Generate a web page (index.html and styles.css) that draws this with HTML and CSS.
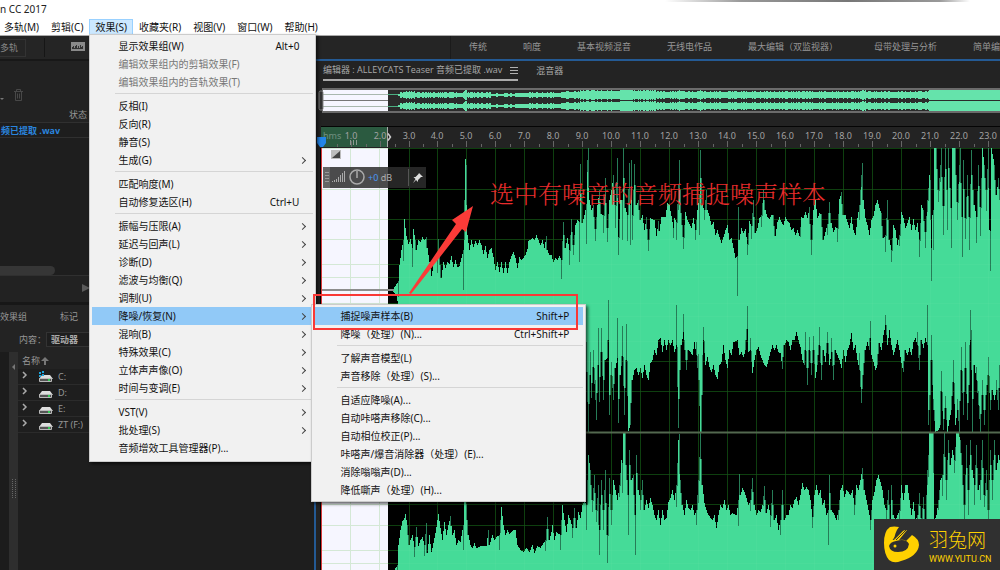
FILE: index.html
```html
<!DOCTYPE html>
<html lang="zh-CN">
<head>
<meta charset="utf-8">
<title>CC 2017</title>
<link rel="stylesheet" href="styles.css">
</head>
<body>
<header class="window-head">
  <div class="title">n CC 2017</div>
  <div class="edge-shadow"></div>
  <nav class="menubar">
    <button class="menu-title">多轨(M)</button>
    <button class="menu-title">剪辑(C)</button>
    <div class="menu-host">
      <button class="menu-title open">效果(S)</button>
      <div class="menu effects-menu">
        <button class="item">显示效果组(W)<kbd>Alt+0</kbd></button>
        <button class="item" disabled>编辑效果组内的剪辑效果(F)</button>
        <button class="item" disabled>编辑效果组内的音轨效果(T)</button>
        <hr>
        <button class="item">反相(I)</button>
        <button class="item">反向(R)</button>
        <button class="item">静音(S)</button>
        <button class="item sub">生成(G)</button>
        <hr>
        <button class="item">匹配响度(M)</button>
        <button class="item">自动修复选区(H)<kbd>Ctrl+U</kbd></button>
        <hr>
        <button class="item sub">振幅与压限(A)</button>
        <button class="item sub">延迟与回声(L)</button>
        <button class="item sub">诊断(D)</button>
        <button class="item sub">滤波与均衡(Q)</button>
        <button class="item sub">调制(U)</button>
        <div class="sub-host">
          <button class="item sub active">降噪/恢复(N)</button>
          <div class="menu noise-menu">
            <button class="item active">捕捉噪声样本(B)<kbd>Shift+P</kbd></button>
            <button class="item">降噪（处理）(N)...<kbd>Ctrl+Shift+P</kbd></button>
            <hr>
            <button class="item">了解声音模型(L)</button>
            <button class="item">声音移除（处理）(S)...</button>
            <hr>
            <button class="item">自适应降噪(A)...</button>
            <button class="item">自动咔嗒声移除(C)...</button>
            <button class="item">自动相位校正(P)...</button>
            <button class="item">咔嗒声/爆音消除器（处理）(E)...</button>
            <button class="item">消除嗡嗡声(D)...</button>
            <button class="item">降低嘶声（处理）(H)...</button>
          </div>
        </div>
        <button class="item sub">混响(B)</button>
        <button class="item sub">特殊效果(C)</button>
        <button class="item sub">立体声声像(O)</button>
        <button class="item sub">时间与变调(E)</button>
        <hr>
        <button class="item sub">VST(V)</button>
        <button class="item sub">批处理(S)</button>
        <button class="item">音频增效工具管理器(P)...</button>
      </div>
    </div>
    <button class="menu-title">收藏夹(R)</button>
    <button class="menu-title">视图(V)</button>
    <button class="menu-title">窗口(W)</button>
    <button class="menu-title">帮助(H)</button>
  </nav>
</header>

<div class="toolbar">
  <div class="tools">
    <button class="track-btn">多轨</button>
    <div class="tool-icons">
      <svg width="26" height="12" viewBox="0 0 26 12">
        <rect x="0" y="1" width="14" height="9" fill="#8a8a8a"/>
        <path d="M1 8V6h1V5h1v2h1V5h1V4h1v3h1V5h1v2h1V4h1v2h1V5h1v3z" fill="#333"/>
        <path d="M22.500 1v10M22 1.500h6M22 6h6M22 10.500h6" stroke="#8a8a8a" fill="none"/>
      </svg>
    </div>
  </div>
  <nav class="workspaces">
    <a href="#">传统</a><a href="#">响度</a><a href="#">基本视频混音</a><a href="#">无线电作品</a><a href="#">最大编辑（双监视器）</a><a href="#">母带处理与分析</a><a href="#">简单编</a>
  </nav>
</div>

<main class="app">
  <aside class="side">
    <section class="files">
      <div class="file-tools">
        <svg width="30" height="14" viewBox="0 0 30 14" fill="none" stroke="#484848">
          <path d="M0 10h4l-2 2z" fill="#777" stroke="none"/>
          <path d="M14 3.500h9M16.500 3.500v-2h4v2M15.500 4v8.500h6V4M17.500 5.500v5M19.500 5.500v5"/>
        </svg>
      </div>
      <div class="file-head"><span>状态</span></div>
      <div class="file-row">频已提取 .wav</div>
      <div class="file-list"><div class="hscroll"></div></div>
      <div class="transport"><svg width="8" height="8" viewBox="0 0 8 8"><path d="M0 0l8 4-8 4z" fill="#5a5a5a"/></svg></div>
    </section>
    <section class="browser">
      <div class="tabs"><span>效果组</span><span>标记</span></div>
      <div class="content-row"><label for="src">内容：</label><select id="src"><option>驱动器</option></select></div>
      <div class="tree">
        <div class="tree-left"></div>
        <div class="gutter"><svg width="8" height="170" viewBox="0 0 8 170"><path d="M6 12v6l-3-3z" fill="#777"/><path d="M3.500 127v20M6.500 127v20" stroke="#666" stroke-dasharray="1 1"/></svg></div>
        <div class="drives">
          <div class="drive-head">名称<svg width="8" height="8" viewBox="0 0 8 8"><path d="M4 0l4 4H5v4H3V4H0z" fill="#777"/></svg></div>
          <div class="drive"><svg width="36" height="14" viewBox="0 0 36 14"><use href="#drv"/><path d="M17 2h2v2h-2zM20 1h2v2h-2zM17 5h2v2h-2zM20 4h2v2h-2z" fill="#1da5dc"/></svg>C:</div>
          <div class="drive"><svg width="36" height="14" viewBox="0 0 36 14"><use href="#drv"/></svg>D:</div>
          <div class="drive"><svg width="36" height="14" viewBox="0 0 36 14"><use href="#drv"/></svg>E:</div>
          <div class="drive"><svg width="36" height="14" viewBox="0 0 36 14"><use href="#drv"/></svg>ZT (F:)</div>
        </div>
      </div>
    </section>
  </aside>

  <section class="editor">
    <div class="editor-tabs">
      <div class="tab current">编辑器 : ALLEYCATS Teaser 音频已提取 .wav
        <svg width="8" height="8" viewBox="0 0 8 8"><path d="M0 1.500h8M0 4.500h8M0 7.500h8" stroke="#b0b0b0"/></svg>
      </div>
      <div class="tab">混音器</div>
    </div>
    <div class="overview">
      <svg class="overview-wave" viewBox="318 88 682 26" preserveAspectRatio="xMinYMin slice">
        <rect x="322" y="88" width="700" height="25" fill="#6b6b6b"/>
        <rect x="323" y="90" width="700" height="21" fill="#2b2b2b"/>
        <rect x="323" y="90" width="65" height="21" fill="#f6f6ff"/>
        <path d="M323 94.500h65M323 106.500h65" stroke="#a9b8ae"/>
        <path d="M323 100.500h65" stroke="#777"/>
        <path d="M388 94.500h14M388 106.500h14" stroke="#4cae82"/>
        <path id="over" fill="#65e3ab"/>
        <rect x="319" y="91" width="4" height="19" rx="1.500" fill="#333" stroke="#888"/>
      </svg>
    </div>
    <svg class="ruler" viewBox="316 126 684 22" preserveAspectRatio="xMinYMin slice">
      <rect x="321" y="126" width="700" height="1" fill="#050505"/>
      <rect x="321" y="127" width="67" height="20" fill="#2b5a40"/>
      <text x="323" y="139" class="hms">hms</text>
      <g id="ticks"></g>
      <path d="M350.500 140v5M353.500 140v5M356.500 140v5" stroke="#8a9a90"/>
      <path d="M387.500 127v20" stroke="#aaa"/><path d="M388 133.500l2.500 3.500-2.500 3.500" fill="none" stroke="#ccc" stroke-width="1.500"/>
      <path d="M317 137h9v6l-3 4h-3l-3-4z" fill="#2385e8"/>
    </svg>
    <div class="stage">
      <svg class="wave" viewBox="316 148 684 422" preserveAspectRatio="xMinYMin slice">
        <rect x="320" y="148" width="1000" height="900" fill="#000"/>
        <g id="grid" stroke="#053505"></g>
        <path id="main" fill="#45db98" shape-rendering="crispEdges"/>
        <path id="thin" stroke="#267c57" shape-rendering="crispEdges"/>
        <g id="grid2" stroke="#b0f0c0" stroke-opacity="0.06"></g>
        <rect x="322" y="148" width="66" height="900" fill="#f6f6ff"/>
        <g id="grid3" stroke="#d4e8d6"></g>
        <path d="M322 290h72" stroke="#8d8d8d" stroke-width="2"/>
        <path d="M322 432.500h700" stroke="#53684f" stroke-width="2"/>
        <path d="M321.500 147v900" stroke="#d83a3a"/>
        <rect x="331" y="150" width="10" height="9" fill="#bdbdbd"/><path d="M340 151v7h-8z" fill="#444"/>
      </svg>
      <div class="hud">
        <svg width="42" height="21" viewBox="0 0 42 21" fill="none">
          <rect width="7" height="21" fill="#666"/><path d="M2 5.500h4M2 8.500h4M2 11.500h4M2 14.500h4" stroke="#999"/>
          <path d="M9.500 15v-1M11.500 15v-2M13.500 15v-3M15.500 15v-5M17.500 15v-7M19.500 15v-9M21.500 15v-11" stroke="#aaa"/>
          <circle cx="34" cy="10" r="7" stroke="#aaa" stroke-width="1.500"/><path d="M34 4v7" stroke="#aaa" stroke-width="1.500"/>
        </svg>
        <span class="gain"><b>+0</b> dB</span>
        <svg width="22" height="21" viewBox="0 0 22 21"><path d="M4.500 2v17" stroke="#555"/><path d="M15 6l4 4-2 0-3 3 0 2-2-2-3 3 2.500-4-2-2h2l3-3z" fill="#ddd"/></svg>
      </div>
    </div>
  </section>
</main>

<svg class="defs" width="0" height="0"><defs><g id="drv"><path d="M1 2l3 3-3 3" fill="none" stroke="#aaa" stroke-width="1.500"/><path d="M20 5h8l3 4H17z" fill="#ddd"/><rect x="17" y="8" width="13" height="4" rx="1" fill="#b9b9b9"/><rect x="18" y="9" width="11" height="2" fill="#555"/><rect x="26" y="9" width="2" height="2" fill="#3c5"/></g></defs></svg>

<div class="note-box"></div>
<svg class="note-arrow" width="66" height="90" viewBox="0 0 66 90"><path d="M0 89L47 20 43 16 64 2 57 28 53 25 2 90z" fill="#fb3b38"/></svg>
<p class="note-text">选中有噪音的音频捕捉噪声样本</p>
<div class="brand">
  <svg width="36" height="37" viewBox="0 0 36 37">
    <path d="M6 1Q10 0 15 1Q11 6 10 14L19 5Q20 4 23 4L15 14Q20 13 22 15L28 9Q35 13 35 19Q34 30 17 35Q10 38 5 34Q0 28 0 17Q0 5 6 1Z" fill="#ffd100"/>
    <path d="M12 15Q22 12 25 18Q24 26 14 26Q6 26 5 20Q6 16 12 15Z" fill="#303030"/><circle cx="11" cy="20" r="1.500" fill="#ffd100"/>
    <path d="M9 14L17 3M12 14L22 4" stroke="#303030" stroke-width="1"/>
  </svg>
  <div class="brand-text"><strong>羽兔网</strong><span>WWW.YUTU.CN</span></div>
</div>
<script src="wave.js"></script>
</body>
</html>
```

FILE: styles.css
```css
* { box-sizing: border-box; }
body {
  margin: 0;
  height: 100vh;
  overflow: hidden;
  position: relative;
  display: flex;
  flex-direction: column;
  background: #1e1e1e;
  font: 10px/18px "Noto Sans", "Noto Sans CJK SC", sans-serif;
  color: #111;
}
button, select, kbd { font: inherit; color: inherit; }
button { border: 0; background: none; padding: 0; text-align: left; white-space: nowrap; }
svg { display: block; flex: none; }

.window-head { background: #fff; border-bottom: 1px solid #aaa; position: relative; z-index: 5; }
.title { height: 19px; color: #222; }
.edge-shadow {
  position: absolute; top: 0; right: 30px; width: 305px; height: 2px;
  background: linear-gradient(90deg, #fff, #999 25%, #777 60%, #999 90%, #fff);
}
.menubar { display: flex; margin-left: -2px; height: 16px; line-height: 14px; }
.menu-title { height: 16px; padding: 0 5px; border: 1px solid transparent; line-height: 14px; }
.menu-title.open { background: #cce8ff; border-color: #99d1ff; }
.menu-host, .sub-host { position: relative; }
.menu {
  position: absolute; display: flex; flex-direction: column;
  background: #f1f1f1; border: 1px solid #ccc; padding: 2px;
  box-shadow: 2px 2px 3px rgba(0, 0, 0, .6);
}
.effects-menu { top: 15px; left: 0; width: 227px; padding-bottom: 4px; }
.noise-menu { top: -3px; left: 219px; width: 275px; z-index: 2; }
.item { display: flex; width: 100%; height: 18px; line-height: 18px; padding: 0 14px 0 26px; }
.item kbd { margin-left: auto; }
.item:disabled { color: #777; }
.item.active { background: #91c9f7; }
.item.sub::after {
  content: ""; width: 4px; height: 4px; margin: 7px -6px 0 auto;
  border: solid #444; border-width: 1px 1px 0 0; transform: rotate(45deg);
}
.menu hr { width: auto; height: 1px; margin: 2px 0 3px 23px; border: 0; background: #d5d5d5; }

.toolbar { display: flex; height: 23px; background: #252525; color: #969696; font-size: 9px; line-height: 21px; }
.tools { display: flex; align-items: center; width: 451px; border-right: 1px solid #1b1b1b; gap: 18px; }
.track-btn { height: 18px; width: 26px; line-height: 16px; color: #888; border: 1px solid #333; border-left: 0; }
.tool-icons { height: 19px; padding: 3px 0 0 26px; border-left: 1px solid #161616; }
.workspaces { display: flex; flex: 1; gap: 36px; padding-left: 18px; white-space: nowrap; overflow: hidden; }
.workspaces a { color: inherit; text-decoration: none; }

.app { flex: 1; display: flex; min-height: 0; }
.side { width: 314px; display: flex; flex-direction: column; color: #969696; font-size: 9px; }
.files { background: #222; border-top: 2px solid #181818; }
.file-tools { height: 45px; padding-top: 27px; }
.file-head { height: 17px; line-height: 17px; padding-left: 69px; border-bottom: 1px solid #303030; }
.file-row { height: 15px; line-height: 15px; padding-left: 1px; color: #2a84dd; font-family: "Open Sans", "Noto Sans CJK SC", sans-serif; font-weight: bold; border-bottom: 1px solid #303030; background: #1e1e1e; }
.file-list { height: 138px; padding-top: 128px; background: #1e1e1e; border-bottom: 1px solid #303030; }
.hscroll { width: 55px; height: 9px; background: #363636; border-radius: 0 5px 5px 0; }
.transport { height: 26px; padding: 8px 0 0 82px; }
.browser { flex: 1; display: flex; flex-direction: column; background: #232323; border-top: 3px solid #171717; }
.tabs { display: flex; gap: 33px; height: 26px; line-height: 24px; }
.content-row { display: flex; align-items: center; height: 17px; padding-left: 19px; }
.content-row select { width: 200px; height: 15px; padding: 0 4px; appearance: none; background: #1e1e1e; border: 1px solid #333; font-weight: bold; color: #aaa; line-height: 13px; }
.tree { flex: 1; display: flex; margin-top: 4px; }
.tree-left { width: 9px; background: #1c1c1c; }
.gutter { width: 9px; background: #2e2e2e; }
.drives { flex: 1; background: #1e1e1e; }
.drive-head { display: flex; align-items: center; gap: 1px; height: 17px; padding-left: 4px; background: #232323; }
.drive { display: flex; align-items: center; height: 16px; padding-left: 4px; border-bottom: 1px solid #2b2b2b; }

.editor { flex: 1; min-width: 0; display: flex; flex-direction: column; background: #232323; border: solid #245a94; border-width: 2px 0 0 2px; }
.editor-tabs { display: flex; gap: 18px; padding-left: 7px; height: 27px; color: #a8a8a8; font: 9px/20px "Open Sans", "Noto Sans CJK SC", sans-serif; }
.tab { height: 20px; white-space: nowrap; }
.tab.current { display: flex; align-items: center; gap: 8px; border-bottom: 2px solid #aaa; }
.overview { padding-left: 2px; height: 38px; }
.overview-wave { width: 100%; height: 26px; }
.ruler { width: 100%; height: 22px; font-size: 9px; fill: #a2a2a2; }
.hms { fill: #719080; }
.stage { position: relative; flex: 1; min-height: 0; }
.wave { width: 100%; height: 100%; }
.hud { position: absolute; left: 7px; top: 19px; width: 103px; height: 21px; display: flex; align-items: center; background: rgba(45, 45, 45, .85); color: #b0b0b0; font-size: 9px; }
.gain { flex: 1; padding-left: 3px; }
.gain b { color: #4a98f5; font-weight: normal; }

.defs { position: absolute; }
.note-box { position: absolute; z-index: 8; left: 313px; top: 294px; width: 265px; height: 36px; border: 2px solid #f93836; }
.note-arrow { position: absolute; z-index: 8; left: 409px; top: 204px; }
.note-text { position: absolute; z-index: 8; left: 490px; top: 179px; margin: 0; white-space: nowrap; color: #e82c2c; font: 300 24px/28px "Noto Serif CJK SC", "Noto Sans CJK SC", serif; }
.brand { position: absolute; z-index: 8; right: 0; bottom: 0; width: 126px; height: 51px; display: flex; align-items: center; padding-left: 10px; gap: 9px; background: #303030; color: #ffd100; }
.brand-text { display: flex; flex-direction: column; }
.brand-text strong { font: 300 19px/28px "Noto Sans CJK SC", sans-serif; }
.brand-text span { font: 9px/12px Roboto, sans-serif; }
```

FILE: wave.js
```js
// Peak outlines: "x,y" pairs, interpolated to one column per pixel.
const TOP1 = "392,290 396,284 398,281 399,265 401,250 403,240 404,219 406,236 408,244 410,239 412,248 413,229 415,240 416,250 418,240 420,242 422,237 424,240 426,237 427,248 429,262 431,276 433,265 435,260 437,256 438,239 441,278 443,262 445,268 447,262 449,264 451,256 453,267 455,260 457,267 459,266 461,258 463,250 464,200 465,159 466,165 467,235 469,250 471,240 473,247 475,241 477,245 479,240 481,245 483,254 485,246 487,258 489,250 491,248 493,257 495,270 497,262 499,272 501,262 503,273 505,262 507,273 509,262 511,256 513,252 515,258 517,268 519,257 521,260 525,255 527,249 528,241 532,238 534,240 536,235 538,240 540,245 542,240 544,248 546,236 547,250 549,255 551,255 553,262 555,258 557,260 559,256 561,260 563,222 565,248 567,238 569,250 571,219 573,245 575,225 577,220 579,222 580,164 582,223 584,215 586,204 587,160 588,148 589,200 591,210 593,205 595,229 597,205 599,190 601,214 603,215 605,178 607,228 609,200 611,190 613,175 615,205 617,158 618,237 620,200 622,200 623,148 625,208 627,215 629,163 630,205 631,160 632,215 634,164 636,205 638,200 640,220 642,215 644,230 646,217 648,240 650,218 652,219 654,220 656,236 658,221 659,231 661,217 665,217 667,203 669,205 671,216 673,228 674,218 676,222 678,185 679,160 680,190 681,213 683,237 685,212 687,220 689,224 691,228 693,218 695,230 697,210 699,195 700,150 702,205 704,210 706,190 707,210 709,216 711,225 713,222 715,235 717,230 719,237 721,243 723,237 725,230 727,225 729,240 731,238 733,248 735,258 737,256 738,207 739,240 741,228 743,233 745,229 747,244 749,221 751,226 753,200 755,233 757,228 759,218 761,215 763,190 765,210 767,217 769,219 771,215 773,215 775,236 777,222 779,217 781,222 783,225 785,217 787,221 789,223 791,230 793,228 795,235 797,230 799,236 801,217 803,218 805,212 807,218 809,207 811,240 813,210 815,200 817,218 819,213 821,214 823,240 825,232 827,224 829,202 831,223 833,232 835,227 837,228 839,199 841,192 843,215 845,215 847,222 849,228 851,217 853,230 855,235 857,218 859,205 861,175 862,163 863,200 865,218 867,225 869,235 871,220 873,216 875,205 877,200 879,208 881,213 883,238 885,235 887,200 889,240 891,250 893,225 895,230 897,245 899,235 901,212 903,218 905,228 907,223 909,217 911,230 913,219 915,230 917,223 919,240 921,205 923,210 925,232 927,200 929,175 930,180 931,248 932,215 933,210 934,148 936,148 938,190 940,165 941,148 943,206 945,148 947,190 948,148 951,208 952,148 955,148 957,202 959,165 960,148 962,217 963,160 965,218 967,175 969,217 971,150 972,175 974,205 976,217 978,165 980,207 982,148 984,165 986,190 988,148 989,230 990,231 991,148 994,165 996,195 998,178 1000,200";
const BOT1 = "392,290 396,296 398,305 403,345 420,350 470,340 540,345 586,372 588,432 590,375 591,398 593,367 595,400 596,420 598,365 599,402 601,352 603,400 605,360 607,358 608,340 609,415 611,375 613,400 615,368 617,358 618,423 620,375 622,356 624,415 626,360 628,431 630,425 632,380 634,370 636,368 638,375 640,368 642,378 644,365 646,375 648,380 650,363 652,360 654,350 656,355 658,340 660,338 662,352 664,340 666,350 668,340 670,345 672,340 674,352 676,345 678,428 680,370 681,345 683,332 684,350 686,370 688,350 690,352 692,355 694,342 696,355 698,380 700,432 701,432 702,395 703,340 705,365 707,357 709,367 711,372 713,365 715,375 717,379 719,365 721,362 723,345 725,360 727,368 729,350 731,355 733,342 737,340 739,355 741,352 743,357 745,350 747,329 748,352 750,350 752,373 754,360 756,350 758,347 760,355 762,360 764,365 766,367 768,360 770,352 772,345 774,350 776,345 778,352 780,353 782,369 784,345 786,340 788,342 790,350 792,340 794,340 796,332 798,340 800,347 802,360 804,365 805,350 807,385 809,350 811,375 813,350 815,378 817,365 819,345 821,380 823,350 825,362 827,343 829,365 831,352 833,380 835,350 837,355 839,360 841,368 843,350 845,362 847,350 849,345 851,333 853,350 855,345 857,360 859,370 861,403 863,375 865,350 867,342 869,350 870,338 871,355 873,362 875,370 877,365 879,343 881,350 883,335 885,325 887,345 889,330 891,345 893,355 895,348 897,340 899,350 901,363 903,372 905,350 907,355 909,348 911,355 913,342 915,338 917,345 919,370 921,340 923,348 925,338 927,345 928,425 930,395 931,360 933,410 935,432 938,430 940,425 941,391 943,430 945,408 947,432 949,420 951,410 953,382 955,425 957,410 959,432 961,370 963,415 965,368 967,420 969,385 970,340 971,370 972,432 974,365 976,380 978,405 980,432 982,395 984,425 986,395 988,375 990,410 992,390 994,400 996,390 998,410 1000,365";
const TOP2 = "394,570 397,565 398,545 400,530 402,521 404,518 405,514 407,525 409,545 410,540 412,535 414,547 416,527 418,546 420,540 422,537 424,545 426,523 427,553 429,535 431,552 433,543 435,533 437,520 438,514 440,528 442,540 444,522 446,535 448,525 450,516 452,535 454,530 456,545 458,540 460,542 462,530 463,525 464,500 466,504 468,535 470,545 472,548 474,543 476,548 480,546 486,546 488,530 489,545 492,535 494,540 497,536 499,535 500,520 501,507 503,525 505,535 507,530 509,534 511,532 513,530 515,530 517,545 520,550 523,552 526,548 529,552 532,545 534,553 537,546 540,548 543,543 545,540 547,517 549,540 551,532 552,525 554,540 556,532 560,535 562,505 564,520 566,532 568,515 570,520 572,528 574,508 576,528 578,512 580,518 582,505 584,500 586,505 588,455 590,470 592,500 594,475 596,510 598,485 599,530 601,480 603,510 605,470 607,535 609,478 611,510 613,480 615,490 617,500 619,485 621,460 622,463 623,433 625,433 626,465 628,495 629,450 631,480 633,475 635,515 636,455 638,490 640,500 642,480 644,510 646,500 648,508 650,498 652,505 654,515 656,520 658,510 660,525 662,510 664,520 666,518 668,502 670,498 672,490 674,500 676,485 678,440 679,434 680,480 682,505 684,515 686,500 688,508 690,510 692,505 694,515 696,510 698,480 700,433 702,485 704,503 706,510 708,515 712,520 714,515 716,528 718,515 720,505 722,508 724,500 726,510 728,505 730,515 732,513 736,515 738,500 739,474 740,495 742,488 744,492 746,498 748,505 750,500 752,478 754,505 756,515 758,510 760,512 762,505 764,486 766,513 768,505 770,515 772,490 774,520 776,515 778,530 780,520 782,490 784,520 786,515 788,515 790,505 792,508 794,500 796,497 798,505 800,495 802,483 804,490 806,487 808,490 810,500 812,517 814,495 816,485 818,495 820,490 822,505 824,500 826,515 828,510 829,475 831,510 834,515 836,520 838,510 840,490 842,485 844,497 846,490 848,492 850,495 852,490 854,505 856,485 858,490 860,480 862,468 864,490 866,500 868,510 870,520 872,500 874,492 876,480 878,475 880,482 882,490 884,505 886,510 888,490 890,520 891,485 893,515 895,520 897,515 899,510 901,485 903,500 905,485 907,485 909,500 911,515 913,502 915,520 917,515 919,493 921,518 923,497 925,520 927,470 928,455 929,433 933,433 934,520 936,515 938,500 940,480 942,475 944,433 946,480 948,440 950,465 952,450 954,460 956,433 958,433 960,440 962,465 964,505 966,445 968,490 970,440 972,470 974,485 976,445 978,490 980,480 982,440 984,495 986,470 988,510 990,450 992,480 994,440 996,470 998,455 1000,465";
// Overview amplitude in pixels.
const AMP = "398,1 401,2 408,3 420,2 440,2 463,2 465,5 467,2 480,2 500,1 510,1 520,2 535,2 550,2 560,2 563,3 578,3 582,4 600,4 615,4 624,5 640,4 670,3 677,3 679,5 682,3 697,3 700,5 703,3 720,3 800,3 830,3 859,3 862,5 866,3 927,3 929,5 940,5 1000,5";

const parse = s => s.split(" ").map(p => p.split(",").map(Number));
const noise = x => { const v = Math.sin(x * 127.1) * 43758.5; return v - Math.floor(v); };
function sample(points, x) {
  let i = 1;
  while (i < points.length - 1 && points[i][0] < x) i++;
  const [a, b] = [points[i - 1], points[i]];
  const t = Math.max(0, Math.min(1, (x - a[0]) / (b[0] - a[0])));
  return Math.round(a[1] + (b[1] - a[1]) * t);
}
const el = id => document.getElementById(id);
const top1 = parse(TOP1), bot1 = parse(BOT1), top2 = parse(TOP2), amp = parse(AMP);
let fill = "", thin = "", over = "";
for (let x = 393; x < 1000; x++) {
  const a = sample(top1, x), b = sample(bot1, x), c = sample(top2, x);
  fill += `M${x} ${a}h1V${b}h-1z`;
  if (x > 394) fill += `M${x} ${c}h1V700h-1z`;
  const rise = (p, dir) => {
    const y = sample(p, x), n = sample(p, x + 1);
    const len = Math.min(40, Math.abs(n - y));
    if (len > 9) thin += `M${x}.5 ${y}v${dir * len}`;
  };
  rise(top1, 1); rise(bot1, -1); rise(top2, 1);
}
for (let x = 398; x < 1000; x++) {
  const r = Math.min(5, sample(amp, x) + (noise(x) > 0.65 ? 1 : 0));
  over += `M${x} ${95 - r}h1v${r * 2}h-1zM${x} ${106 - r}h1v${r * 2}h-1z`;
}
el("main").setAttribute("d", fill);
el("thin").setAttribute("d", thin);
el("over").setAttribute("d", over);

const rows = [148, 189, 219, 239, 264, 277, 303, 316, 341, 361, 391, 474, 504, 525, 550, 563];
let lines = "", ticks = "";
for (const y of rows) lines += `M322 ${y}.5H1000`;
for (let n = 1; n < 24; n++) {
  const x = Math.round(321.6 + 28.97 * n);
  lines += `M${x}.5 148V700`;
  ticks += `<path d="M${x}.5 141v6M${x - 14}.5 144v3" stroke="#666"/><text x="${x}" y="139" text-anchor="middle">${n}.0</text>`;
}
el("grid").innerHTML = el("grid2").innerHTML = `<path d="${lines}"/>`;
let light = "M350.5 148V700M379.5 148V700";
for (const y of rows) light += `M322 ${y}.5H388`;
el("grid3").innerHTML = `<path d="${light}"/>`;
el("ticks").innerHTML = ticks;
```
